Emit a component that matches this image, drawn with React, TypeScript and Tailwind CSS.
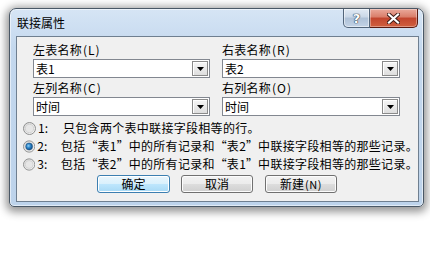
import React from "react";

const F = "font-['Noto_Sans_CJK_SC','Noto_Sans',sans-serif]";

function Combo({ value, width }: { value: string; width: string }) {
  return (
    <div className={`mt-[2px] h-[19px] ${width} border border-[#828790] bg-white flex items-stretch`}>
      <div className="flex-1 pl-[2px] text-[12px] leading-[17px] text-black">{value}</div>
      <div className="m-[1px] w-[16px] border border-[#8a8a8a] bg-[linear-gradient(to_bottom,#f6f6f6,#dedede)] flex items-center justify-center shadow-[inset_1px_1px_0_#ffffff]">
        <svg width="7" height="4" viewBox="0 0 7 4">
          <polygon points="0,0 7,0 3.5,4" fill="#000" />
        </svg>
      </div>
    </div>
  );
}

function Radio({ checked }: { checked?: boolean }) {
  return (
    <svg width="13" height="13" viewBox="0 0 13 13">
      <defs>
        <linearGradient id={checked ? "ro1" : "ro0"} x1="0" y1="0" x2="1" y2="1">
          <stop offset="0" stopColor="#d8d8d8" />
          <stop offset="1" stopColor="#f8f8f8" />
        </linearGradient>
        <radialGradient id="rdot" cx="0.4" cy="0.4" r="0.6">
          <stop offset="0" stopColor="#8fd0f5" />
          <stop offset="0.5" stopColor="#2e86c9" />
          <stop offset="1" stopColor="#0d4f8c" />
        </radialGradient>
      </defs>
      <circle cx="6.5" cy="6.5" r="6" fill={`url(#${checked ? "ro1" : "ro0"})`} stroke="#8e8f8f" strokeWidth="1" />
      <circle cx="6.5" cy="6.5" r="4.2" fill="#e6e6e6" stroke="#c4c4c4" strokeWidth="0.6" />
      {checked && <circle cx="6.5" cy="6.5" r="3.6" fill="url(#rdot)" stroke="#1a4f80" strokeWidth="0.6" />}
    </svg>
  );
}

function LQ() {
  return <span className="inline-block w-[12px] text-right">“</span>;
}
function RQ() {
  return <span className="inline-block w-[12px] text-left">”</span>;
}

function RadioRow({ n, children, checked }: { n: string; children: React.ReactNode; checked?: boolean }) {
  return (
    <div className="h-[18px] flex items-center pl-[6px]">
      <Radio checked={checked} />
      <span className="ml-[2px] w-[25px] text-[12px] leading-[14px]">{n}</span>
      <span className="text-[12px] leading-[14px] whitespace-nowrap tracking-[0.3px]">{children}</span>
    </div>
  );
}

function Label({ main, key2 }: { main: string; key2: string }) {
  return (
    <div className="h-[14px] text-[12px] leading-[14px] whitespace-nowrap tracking-[0.25px]">
      {main}
      <span className="ml-[1px] tracking-[1px]">({key2})</span>
    </div>
  );
}

function Btn({ label, def, w, ml }: { label: React.ReactNode; def?: boolean; w: string; ml: string }) {
  return (
    <div
      className={`${w} ${ml} h-[18px] rounded-[3px] border flex items-center justify-center text-[12px] leading-[14px] ${
        def
          ? "border-[#3c7fb1] bg-[linear-gradient(to_bottom,#eaf6fd_0%,#d9f0fc_50%,#bee6fd_51%,#a7d9f5_100%)] shadow-[inset_0_0_0_1px_#ffffff]"
          : "border-[#707070] bg-[linear-gradient(to_bottom,#f2f2f2_0%,#ebebeb_50%,#dddddd_51%,#cfcfcf_100%)] shadow-[inset_0_0_0_1px_#fcfcfc]"
      }`}
    >
      {label}
    </div>
  );
}

export default function App() {
  return (
    <div lang="zh-CN" className={`w-[430px] h-[272px] bg-white overflow-hidden pt-[8px] pl-[9px] text-black ${F}`}>
      <div className="w-[415px] h-[199px] rounded-t-[7px] rounded-b-[5px] border border-[#4a5866] bg-[linear-gradient(to_bottom,#d6e5f5_0%,#c4d8ee_20%,#bdd3eb_100%)] shadow-[0_2px_9px_3px_rgba(0,0,0,0.42),inset_0_0_0_1px_rgba(255,255,255,0.55)] flex flex-col">
        <div className="h-[27px] flex items-start justify-between pr-[5px]">
          <div className="pl-[7px] pt-[8px] text-[12px] leading-[12px]">联接属性</div>
          <div className="flex">
            <div className="w-[27px] h-[19px] rounded-bl-[5px] border border-[#52657a] border-t-0 bg-[linear-gradient(to_bottom,#e1eaf4_0%,#c9d7e7_45%,#aec1d7_50%,#c3d3e6_100%)] flex items-center justify-center shadow-[inset_0_0_0_1px_rgba(255,255,255,0.5)]">
              <span className="font-['DejaVu_Sans',sans-serif] font-bold text-[13px] leading-[13px] text-white [text-shadow:0_0_1px_#2a3a4c,0_0_1px_#2a3a4c,0_0_1px_#2a3a4c]">?</span>
            </div>
            <div className="w-[48px] h-[19px] rounded-br-[5px] border border-l-0 border-t-0 border-[#5a1a10] bg-[linear-gradient(to_bottom,#eaaa9c_0%,#d97d69_45%,#c2452e_50%,#d0603f_100%)] flex items-center justify-center shadow-[inset_0_0_0_1px_rgba(255,255,255,0.35)]">
              <svg width="13" height="11" viewBox="0 0 13 11">
                <path d="M2 1.5 L11 9.5 M11 1.5 L2 9.5" stroke="#3b1a14" strokeWidth="4" strokeLinecap="square" />
                <path d="M2 1.5 L11 9.5 M11 1.5 L2 9.5" stroke="#ffffff" strokeWidth="2.2" strokeLinecap="square" />
              </svg>
            </div>
          </div>
        </div>
        <div className="ml-[6px] w-[403px] h-[166px] border border-[#6f7f90] bg-[#f0f0f0] pt-[6px] flex flex-col">
          <div className="flex pl-[16px]">
            <div className="w-[177px] flex flex-col">
              <Label main="左表名称" key2="L" />
              <Combo value="表1" width="w-[177px]" />
              <div className="mt-[3px]">
                <Label main="左列名称" key2="C" />
              </div>
              <Combo value="时间" width="w-[177px]" />
            </div>
            <div className="ml-[12px] w-[178px] flex flex-col">
              <Label main="右表名称" key2="R" />
              <Combo value="表2" width="w-[178px]" />
              <div className="mt-[3px]">
                <Label main="右列名称" key2="O" />
              </div>
              <Combo value="时间" width="w-[178px]" />
            </div>
          </div>
          <div className="mt-[3px] flex flex-col">
            <RadioRow n="1:">只包含两个表中联接字段相等的行。</RadioRow>
            <RadioRow n="2:" checked>
              包括<LQ />表1<RQ />中的所有记录和<LQ />表2<RQ />中联接字段相等的那些记录。
            </RadioRow>
            <RadioRow n="3:">
              包括<LQ />表2<RQ />中的所有记录和<LQ />表1<RQ />中联接字段相等的那些记录。
            </RadioRow>
          </div>
          <div className="mt-[2px] flex pl-[80px]">
            <Btn label="确定" def w="w-[73px]" ml="ml-0" />
            <Btn label="取消" w="w-[72px]" ml="ml-[11px]" />
            <Btn
              label={
                <span className="whitespace-nowrap">
                  新建<span className="ml-[1px] tracking-[0.5px] text-[11px]">(N)</span>
                </span>
              }
              w="w-[72px]"
              ml="ml-[12px]"
            />
          </div>
        </div>
      </div>
    </div>
  );
}
